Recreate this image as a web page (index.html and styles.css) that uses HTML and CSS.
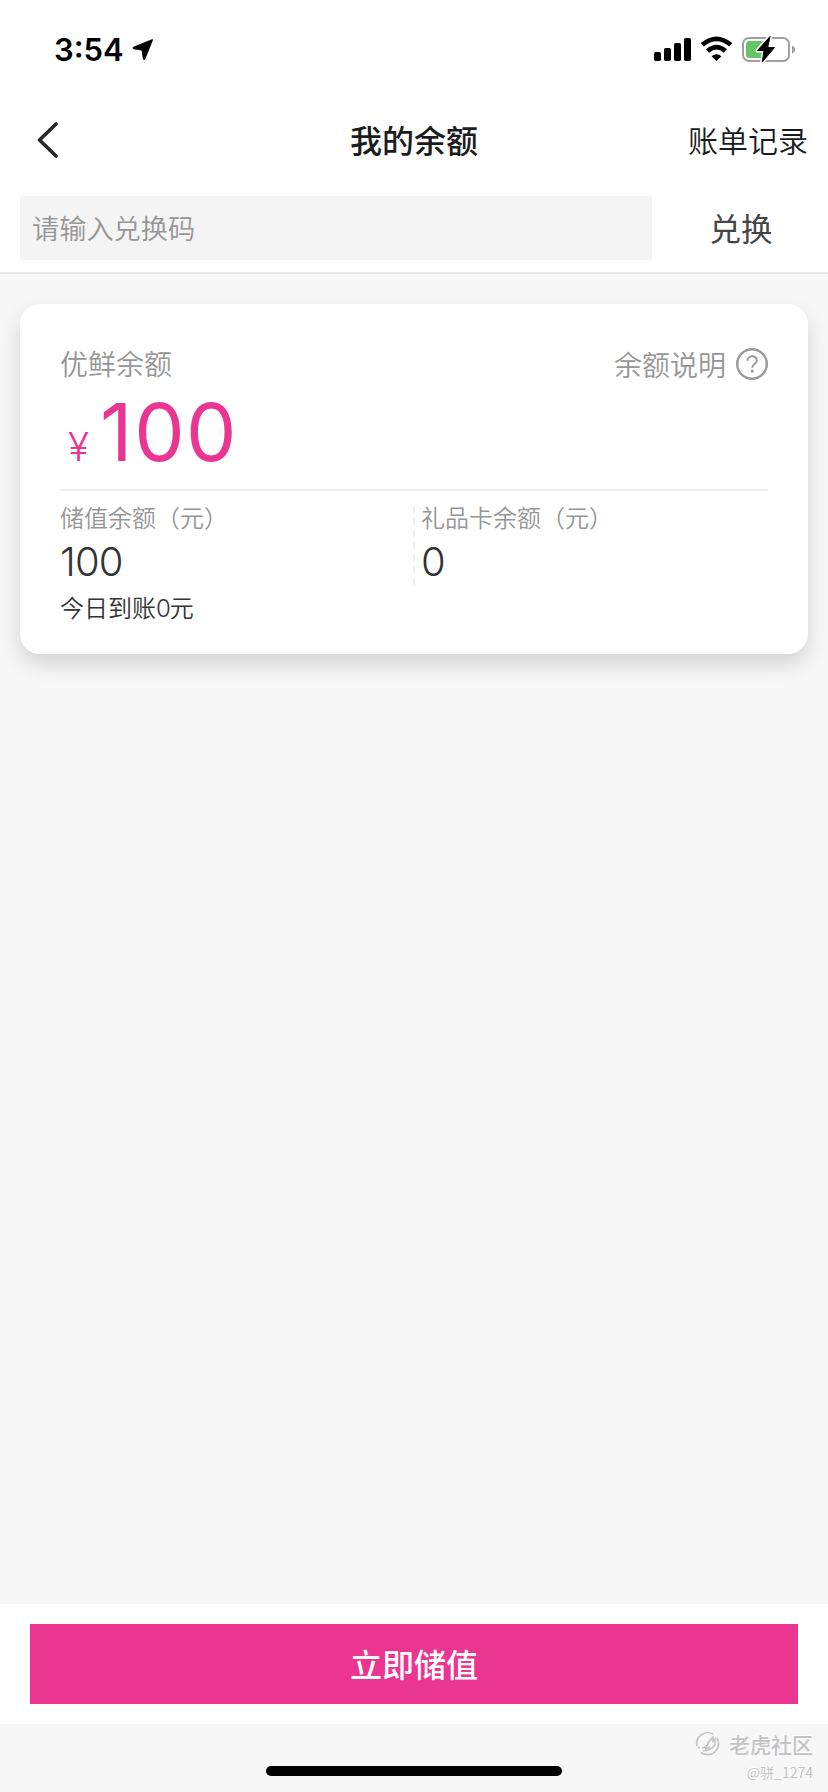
FILE: index.html
```html
<!DOCTYPE html>
<html lang="zh-CN">
<head>
<meta charset="utf-8">
<title>我的余额</title>
<link rel="stylesheet" href="styles.css">
</head>
<body>
<div class="screen">
  <div class="status-bar">
    <span class="time">3:54</span>
    <svg class="location" width="22" height="22" viewBox="0 0 22 22"><path d="M20.5 1.2Q21 .2 19.8.7L1.3 8.3Q.3 9 1.4 9.7L10 11.2 11.3 20Q12 21.4 12.8 20.2Z" fill="#000" stroke="#000" stroke-width=".8"/></svg>
    <svg class="signals" width="144" height="28" viewBox="0 0 144 28">
      <rect x="1" y="16" width="7" height="9" rx="1.8"/>
      <rect x="11" y="12" width="7" height="13" rx="1.8"/>
      <rect x="21" y="7" width="7" height="18" rx="1.8"/>
      <rect x="31" y="2" width="7" height="23" rx="1.8"/>
      <g fill="none" stroke="#000" stroke-width="4.6">
        <path d="M49.2 8.8Q63.5-3.2 77.8 8.8"/>
        <path d="M54.6 15Q63.5 7.2 72.4 15"/>
      </g>
      <path d="M58.6 20.2Q63.5 16.4 68.4 20.2L63.5 25Z"/>
      <rect x="90" y="2" width="46" height="23" rx="6" fill="none" stroke="#a0a0a3" stroke-width="2"/>
      <path d="M139 9.5Q142 10.5 142 13.5T139 17.5Z" fill="#a0a0a3"/>
      <rect x="93" y="5" width="22" height="17" rx="3.5" fill="#65c466"/>
      <path d="M117 .5L104.5 14.5H111L109.3 26 121.5 11.5H114.7Z" stroke="#fff" stroke-width="4" stroke-linejoin="round"/>
      <path d="M117 .5L104.5 14.5H111L109.3 26 121.5 11.5H114.7Z" stroke="#000" stroke-linejoin="round"/>
    </svg>
  </div>
  <header class="nav">
    <svg class="back" width="24" height="40" viewBox="0 0 24 40"><path d="M19 4L2.5 20 19 36" fill="none" stroke="#28282a" stroke-width="3.6" stroke-linecap="round" stroke-linejoin="round"/></svg>
    <h1 class="title">我的余额</h1>
    <span class="records">账单记录</span>
  </header>
  <div class="redeem">
    <div class="code-input">请输入兑换码</div>
    <div class="redeem-action">兑换</div>
  </div>
  <main class="content">
    <section class="card">
      <div class="card-head">
        <span>优鲜余额</span>
        <span class="help">余额说明
          <svg width="32" height="32" viewBox="0 0 32 32" fill="none" stroke="#999"><circle cx="16" cy="16" r="14.8" stroke-width="2.4"/><path d="M11.5 12.8C11.5 6.8 20.8 6.8 20.8 12.4C20.8 15.8 16.2 15.8 16.2 19.8" stroke-width="2"/><circle cx="16.2" cy="23" r="1.5" fill="#999" stroke="none"/></svg>
        </span>
      </div>
      <div class="total"><span class="currency">¥</span><span class="amount">100</span></div>
      <div class="breakdown">
        <div class="item">
          <div class="label">储值余额（元）</div>
          <div class="value">100</div>
          <div class="today">今日到账<span class="digit">0</span>元</div>
        </div>
        <div class="divider"></div>
        <div class="item">
          <div class="label">礼品卡余额（元）</div>
          <div class="value">0</div>
        </div>
      </div>
    </section>
  </main>
  <div class="footer"><div class="topup">立即储值</div></div>
  <div class="bottom">
    <div class="home-indicator"></div>
    <div class="watermark">
      <div class="brand">
        <svg width="26" height="26" viewBox="0 0 26 26" fill="none" stroke="#c4c4c6" stroke-width="1.7"><path d="M2 15A11 11 0 0 1 18 3M22 7A11 11 0 0 1 6 21.5"/><path d="M3 16L5 17M7 17Q12 17 13 12L18 6V10L20 8V13Q18 19 8 20M10 18L15 16"/></svg>
        <span>老虎社区</span>
      </div>
      <div class="user">@骈_1274</div>
    </div>
  </div>
</div>
</body>
</html>
```
FILE: styles.css
```css
* { box-sizing: border-box; }
body {
  margin: 0;
  background: #f7f7f7;
  font-family: "Noto Sans CJK SC", sans-serif;
  font-weight: 350;
}
.screen { display: flex; flex-direction: column; width: 828px; height: 1792px; overflow: hidden; }
.status-bar { display: flex; align-items: center; height: 88px; padding: 12px 31px 0 54px; background: #fff; }
.time { font: 600 31px/40px Inter, sans-serif; }
.location { margin: 0 0 0 8px; }
.signals { margin-left: auto; }
.nav { display: grid; grid-template-columns: 1fr auto 1fr; align-items: center; height: 104px; padding: 0 20px 0 37px; background: #fff; color: #1b1c1e; }
.title { margin: 0 0 2px -17px; font-size: 32px; line-height: 48px; font-weight: 500; }
.records { justify-self: end; margin-bottom: 2px; font-size: 30px; line-height: 44px; }
.redeem { display: flex; height: 82px; padding: 4px 20px 12px; background: #fff; border-bottom: 2px solid #e8e8e8; }
.code-input { width: 632px; height: 64px; padding-left: 12px; border-radius: 4px; background: #f4f4f4; color: #969696; font-size: 27.2px; line-height: 63px; }
.redeem-action { flex: 1; padding-left: 22px; text-align: center; color: #444; font-size: 31.5px; line-height: 63px; font-weight: 400; }
.content { flex: 1; padding: 30px 20px 0; }
.card { height: 350px; padding: 40px 40px 0; border-radius: 20px; background: #fff; box-shadow: 0 10px 20px rgba(0, 0, 0, .14); }
.card-head { display: flex; justify-content: space-between; height: 40px; line-height: 39px; color: #969696; font-size: 28px; }
.help { display: flex; align-items: center; gap: 10px; }
.total { display: flex; align-items: baseline; height: 107px; color: #ea3691; font-family: Inter, sans-serif; font-weight: 400; line-height: 96px; border-bottom: 2px solid #f0f0f0; }
.currency { margin-left: 8px; font-size: 39px; font-weight: 350; }
.amount { margin-left: 11px; font-size: 80px; letter-spacing: 1.5px; }
.breakdown { display: flex; padding-top: 12px; }
.item { flex: 0 0 353px; }
.item:last-child { flex: 1; }
.label { height: 28px; line-height: 27px; font-size: 24px; color: #969696; }
.value { height: 48px; margin-top: 7px; line-height: 48px; font-family: Inter, sans-serif; font-weight: 300; font-size: 40px; letter-spacing: -.8px; color: #333; }
.today { margin-top: 7px; line-height: 28px; font-size: 24px; color: #333; }
.digit { font-family: Inter, sans-serif; font-weight: 300; letter-spacing: -1px; }
.divider { width: 2px; height: 84px; margin: 3px 6px 0 0; background: repeating-linear-gradient(to bottom, #f0f0f0 0 7px, transparent 7px 12px); }
.footer { height: 120px; padding: 20px 30px; background: #fff; }
.topup { height: 80px; background: #ea3691; color: #fff; text-align: center; font-size: 32px; line-height: 78px; font-weight: 500; }
.bottom { position: relative; height: 68px; padding-top: 42px; }
.home-indicator { width: 296px; height: 10px; margin: 0 auto; border-radius: 5px; background: #000; }
.watermark { position: absolute; top: 5px; right: 15px; color: #c4c4c6; text-align: right; text-shadow: -1px -1px 0 #fff; }
.brand { display: flex; align-items: center; gap: 8px; font-size: 21px; line-height: 30px; font-weight: 500; }
.user { margin-top: 1px; line-height: 24px; font-size: 14px; font-weight: 400; }
```
